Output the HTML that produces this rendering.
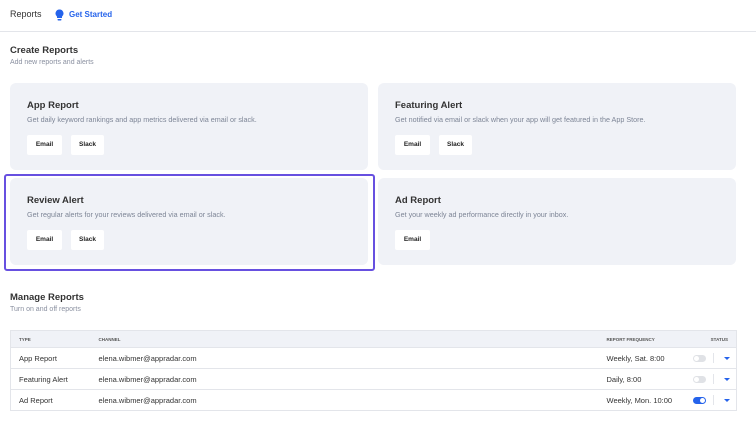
<!DOCTYPE html>
<html><head><style>
*{margin:0;padding:0;box-sizing:border-box}
body{width:756px;height:429px;background:#fff;font-family:"Liberation Sans",sans-serif;color:#333;position:relative;overflow:hidden}
.abs{position:absolute}
.hdr{left:0;top:0;width:756px;height:32px;border-bottom:1px solid #e3e5ea}
.card{position:absolute;background:#f0f2f7;border-radius:6px;width:358px;height:87px}
.card h3{position:absolute;left:17px;top:17px;font-size:9.5px;font-weight:bold;color:#333}
.card p{position:absolute;left:17px;top:32px;font-size:7.2px;color:#7d8596}
.btn{position:absolute;top:52px;height:20px;background:#fff;border-radius:2px;font-size:6.5px;font-weight:bold;color:#222;text-align:center;line-height:20px}
.sec{font-size:9.5px;font-weight:bold;color:#333}
.sub{font-size:7px;color:#8a90a0}
table{position:absolute;left:10px;top:330px;width:726px;table-layout:fixed;border-collapse:collapse;border:1px solid #e3e5ea;font-size:7.5px}
th{background:#f0f2f7;height:17px;font-size:4.5px;font-weight:bold;color:#555;text-align:left;padding-left:8px}
td{height:21px;border-top:1px solid #e3e5ea;padding-left:8px;color:#333;white-space:nowrap}
.tg{display:inline-block;width:13px;height:7px;border-radius:4px;background:#e0e2e6;position:relative;vertical-align:middle}
.tg::after{content:"";position:absolute;left:1px;top:1px;width:5px;height:5px;border-radius:50%;background:#fff}
.tg.on{background:#2563eb}.tg.on::after{left:7px}
.ar{display:inline-block;width:0;height:0;border-left:3px solid transparent;border-right:3px solid transparent;border-top:3px solid #2563eb;vertical-align:middle;margin-left:10px}
.sp{display:inline-block;width:1px;height:10px;background:#e3e5ea;vertical-align:middle;margin-left:7px}
</style></head><body>
<div class="abs hdr"></div>
<div class="abs" style="left:10px;top:9px;font-size:9px;color:#333">Reports</div>
<svg class="abs" style="left:55px;top:9px" width="9" height="12" viewBox="0 0 9 12"><path d="M4.5 0.5a4 4 0 0 0-2.5 7.1V9h5V7.6A4 4 0 0 0 4.5 0.5z" fill="#2563eb"/><rect x="2.5" y="10" width="4" height="1.5" rx=".7" fill="#2563eb"/></svg>
<div class="abs" style="left:69px;top:10px;font-size:8px;font-weight:bold;color:#2563eb">Get Started</div>
<div class="abs sec" style="left:10px;top:45px">Create Reports</div>
<div class="abs sub" style="left:10px;top:59px">Add new reports and alerts</div>

<div class="card" style="left:10px;top:83px"><h3>App Report</h3><p>Get daily keyword rankings and app metrics delivered via email or slack.</p><div class="btn" style="left:17px;width:35px">Email</div><div class="btn" style="left:61px;width:33px">Slack</div></div>
<div class="card" style="left:378px;top:83px"><h3>Featuring Alert</h3><p>Get notified via email or slack when your app will get featured in the App Store.</p><div class="btn" style="left:17px;width:35px">Email</div><div class="btn" style="left:61px;width:33px">Slack</div></div>
<div class="abs" style="left:4px;top:174px;width:371px;height:97px;border:2px solid #6750e0;border-radius:3px"></div>
<div class="card" style="left:10px;top:178px"><h3>Review Alert</h3><p>Get regular alerts for your reviews delivered via email or slack.</p><div class="btn" style="left:17px;width:35px">Email</div><div class="btn" style="left:61px;width:33px">Slack</div></div>
<div class="card" style="left:378px;top:178px"><h3>Ad Report</h3><p>Get your weekly ad performance directly in your inbox.</p><div class="btn" style="left:17px;width:35px">Email</div></div>

<div class="abs sec" style="left:10px;top:292px">Manage Reports</div>
<div class="abs sub" style="left:10px;top:306px">Turn on and off reports</div>
<table>
<colgroup><col style="width:80px"><col style="width:508px"><col style="width:88px"><col style="width:50px"></colgroup>
<tr><th>TYPE</th><th>CHANNEL</th><th>REPORT FREQUENCY</th><th style="text-align:right;padding-right:8px">STATUS</th></tr>
<tr><td>App Report</td><td>elena.wibmer@appradar.com</td><td>Weekly, Sat. 8:00</td><td style="padding-left:6px"><span class="tg"></span><span class="sp"></span><span class="ar"></span></td></tr>
<tr><td>Featuring Alert</td><td>elena.wibmer@appradar.com</td><td>Daily, 8:00</td><td style="padding-left:6px"><span class="tg"></span><span class="sp"></span><span class="ar"></span></td></tr>
<tr><td>Ad Report</td><td>elena.wibmer@appradar.com</td><td>Weekly, Mon. 10:00</td><td style="padding-left:6px"><span class="tg on"></span><span class="sp"></span><span class="ar"></span></td></tr>
</table>
</body></html>
